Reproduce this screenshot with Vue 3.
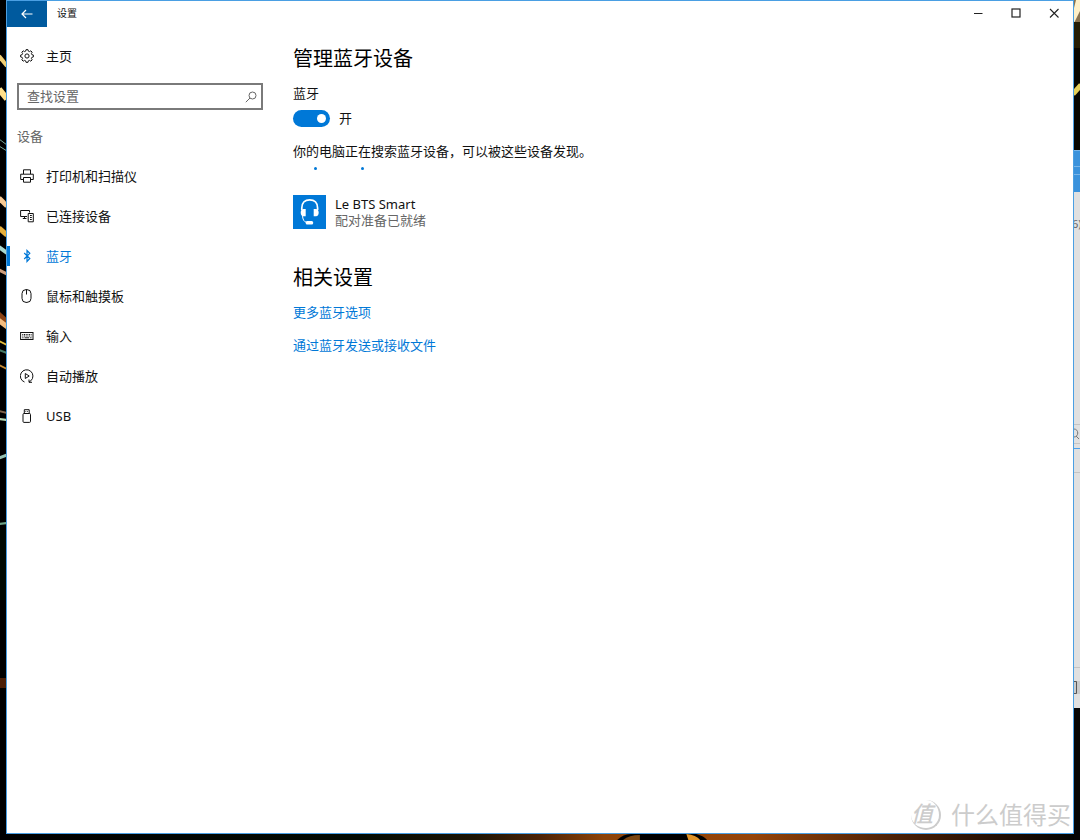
<script setup>
import { ref } from 'vue'

const query = ref('')
const bluetoothOn = ref(true)
const current = ref('bluetooth')

const items = [
  { id: 'printer', label: '打印机和扫描仪' },
  { id: 'connected', label: '已连接设备' },
  { id: 'bluetooth', label: '蓝牙' },
  { id: 'mouse', label: '鼠标和触摸板' },
  { id: 'typing', label: '输入' },
  { id: 'autoplay', label: '自动播放' },
  { id: 'usb', label: 'USB' },
]
</script>

<template>
  <div class="desktop">
    <svg class="edge-left" viewBox="0 0 6 840" preserveAspectRatio="none" aria-hidden="true">
      <rect width="6" height="840" fill="#000" />
      <rect y="530" width="6" height="70" fill="#010a02" />
      <g stroke-width="4" fill="none">
        <path d="M-1 56L7 66" stroke="#f2cf74" />
        <path d="M-1 89L7 99" stroke="#ffe08a" stroke-width="6" />
        <path d="M-1 139L7 145M-1 146L7 151" stroke="#79a99c" stroke-width="1" />
        <path d="M-1 198L7 206" stroke="#f7c993" stroke-width="5" />
        <path d="M-1 228L7 235" stroke="#e8b03c" stroke-width="5" />
        <path d="M-1 247L7 253" stroke="#a8d8cf" />
        <path d="M-1 270L7 274" stroke="#cf9f7c" stroke-width="3" />
        <path d="M-3 314L9 325" stroke="#8a4214" stroke-width="7" />
        <path d="M-3 319L9 328" stroke="#f3bd80" stroke-width="5" />
        <path d="M-1 341L7 345" stroke="#e3bc3d" stroke-width="2" />
        <path d="M-1 350L7 353" stroke="#477a68" stroke-width="2" />
        <path d="M-1 365L7 369" stroke="#c48b36" stroke-width="2" />
        <path d="M-1 411L7 413" stroke="#81644c" stroke-width="2" />
        <path d="M-1 419L7 420" stroke="#b9d9b6" stroke-width="2" />
        <path d="M-1 458L7 455" stroke="#95c2b3" stroke-width="3" />
        <path d="M-1 524L7 523" stroke="#6da288" stroke-width="2" />
      </g>
      <rect y="678" width="6" height="10" fill="#4b1e06" />
    </svg>

    <div class="window">
      <header class="titlebar">
        <button class="back" type="button" aria-label="返回">
          <svg width="12" height="10" viewBox="0 0 12 10"><path d="M11.500 5H1M5 1L1 5L5 9" fill="none" stroke="#fff" stroke-width="1.2" /></svg>
        </button>
        <span class="title">设置</span>
        <div class="captions">
          <button type="button" aria-label="最小化">
            <svg width="10" height="10" viewBox="0 0 10 10"><path d="M1 5.500H9.500" stroke="#222" /></svg>
          </button>
          <button type="button" aria-label="最大化">
            <svg width="10" height="10" viewBox="0 0 10 10"><rect x="1" y="1" width="8" height="8" fill="none" stroke="#222" stroke-width="1.200" /></svg>
          </button>
          <button type="button" aria-label="关闭">
            <svg width="10" height="10" viewBox="0 0 10 10"><path d="M1 1L9.500 9.500M9.500 1L1 9.500" stroke="#222" stroke-width="1.100" /></svg>
          </button>
        </div>
      </header>

      <div class="body">
        <aside class="sidebar">
          <button class="nav-item" type="button">
            <svg class="ico" viewBox="0 0 14 14">
              <path d="M5.7 2.100L6.100.6H7.900L8.300 2.100L9.500 2.600L10.800 1.800L12.200 3.200L11.400 4.500L11.900 5.700L13.400 6.100V7.900L11.900 8.300L11.400 9.500L12.200 10.800L10.800 12.200L9.500 11.400L8.300 11.900L7.900 13.400H6.100L5.700 11.900L4.500 11.400L3.200 12.200L1.800 10.800L2.600 9.500L2.100 8.300L.6 7.900V6.100L2.100 5.700L2.600 4.500L1.800 3.200L3.200 1.800L4.500 2.600Z" />
              <circle cx="7" cy="7" r="2.100" />
            </svg>
            <span>主页</span>
          </button>

          <div class="search">
            <input v-model="query" type="text" placeholder="查找设置" aria-label="查找设置" />
            <svg width="12" height="12" viewBox="0 0 12 12"><g fill="none" stroke="#666"><circle cx="7.500" cy="4.500" r="3.500" /><path d="M5 7L.8 11.200" /></g></svg>
          </div>

          <h2 class="group">设备</h2>

          <nav>
            <button
              v-for="item in items"
              :key="item.id"
              class="nav-item"
              :class="{ active: current === item.id }"
              type="button"
              @click="current = item.id"
            >
              <svg class="ico" viewBox="0 0 14 14">
                <g v-if="item.id === 'printer'">
                  <path d="M3.500 5V.8H10.500V5M3.500 10.500H.7V5.200H13.300V10.500H10.500" />
                  <path d="M3.500 8.500H10.500V13.200H3.500Z" />
                </g>
                <g v-else-if="item.id === 'connected'">
                  <path d="M7 7.500H.6V1.500H9.500V3.500M4.500 7.500V9.500M2.800 9.500H6.500" />
                  <path d="M8.200 4.500H13.300V12.800H8.200ZM10 6.500H11.800M10 8.500H11.800M10 10.500H11.800" />
                </g>
                <path v-else-if="item.id === 'bluetooth'" d="M4.200 4L9.800 9.500L7 12.500V1.500L9.800 4.300L4.200 10" stroke-width="1.200" />
                <g v-else-if="item.id === 'mouse'">
                  <rect x="2" y=".6" width="9" height="12.800" rx="4" />
                  <path d="M6.500 1V5.500" />
                </g>
                <g v-else-if="item.id === 'typing'">
                  <rect x=".6" y="3.500" width="12.400" height="7" />
                  <path d="M2.300 5.500H11.500M2.300 7H11.500" stroke-dasharray="1 .7" />
                  <path d="M2.300 8.800H3.500M4.500 8.800H9.200M10.200 8.800H11.500" />
                </g>
                <g v-else-if="item.id === 'autoplay'">
                  <path d="M4.500 13A6.300 6.300 0 1 1 10.800 11.800L9 13.200M9 10.500V13.300H12" />
                  <path d="M5.300 4.500L9.200 7L5.300 9.500Z" />
                </g>
                <g v-else>
                  <path d="M4.300 4.500V.7H9.200V4.500M5.500 2.500H6.200M7.300 2.500H8" />
                  <rect x="3" y="4.500" width="7.500" height="8.900" rx="1" />
                </g>
              </svg>
              <span>{{ item.label }}</span>
            </button>
          </nav>
        </aside>

        <main class="content">
          <h1>管理蓝牙设备</h1>
          <label class="caption" for="bt-toggle">蓝牙</label>
          <div class="toggle-row">
            <input id="bt-toggle" v-model="bluetoothOn" class="toggle" type="checkbox" role="switch" />
            <span>{{ bluetoothOn ? '开' : '关' }}</span>
          </div>
          <p>你的电脑正在搜索蓝牙设备，可以被这些设备发现。</p>
          <div class="progress" role="progressbar" aria-label="正在搜索"><i></i><i></i></div>

          <button class="device" type="button">
            <svg width="33" height="34" viewBox="0 0 33 34">
              <rect width="33" height="34" fill="#0078d7" />
              <g fill="none" stroke="#fff">
                <path d="M8.800 15V13C8.800 7.800 12 4.800 16.700 4.800S24.600 7.800 24.600 13V15" stroke-width="1.700" />
                <path d="M9.500 20C9.500 24.500 11 27 14 27.500" stroke-width="1" />
              </g>
              <path d="M12.700 14V21.300H10.500C8.700 21.300 7.700 19.700 7.700 17.600S8.700 14 10.500 14ZM20.700 14V21.300H23C24.700 21.300 25.700 19.700 25.700 17.600S24.700 14 23 14Z" fill="#fff" />
              <rect x="12.700" y="26" width="7.500" height="3.600" rx="1.500" fill="#fff" />
            </svg>
            <span class="device-text">
              <span>Le BTS Smart</span>
              <span class="status">配对准备已就绪</span>
            </span>
          </button>

          <h1 class="related">相关设置</h1>
          <a href="#options">更多蓝牙选项</a>
          <a href="#transfer">通过蓝牙发送或接收文件</a>
        </main>
      </div>
    </div>

    <svg class="edge-right" viewBox="0 0 6 840" preserveAspectRatio="none" aria-hidden="true">
      <rect width="6" height="840" fill="#080600" />
      <rect width="6" height="22" fill="#8a7350" />
      <path d="M0 23L6 11V0H2L0 8Z" fill="#fff0c8" />
      <rect y="22" width="6" height="26" fill="#241d05" />
      <path d="M-1 94L7 85" stroke="#e6cf58" stroke-width="5" />
      <rect y="150" width="6" height="42" fill="#3a92dc" />
      <path d="M0 150.500H6M0 166.500H6M0 174.500H6" stroke="#79b5e8" />
      <rect y="192" width="6" height="516" fill="#e0e0e0" />
      <path d="M0 424.500H6M0 443.500H6M0 472.500H6M0 667.500H6" stroke="#c4c4c4" />
      <rect y="448" width="6" height="1" fill="#4aa0ea" />
      <text x="-2" y="228" font-size="11" fill="#666">6)</text>
      <path d="M0 429C5 429 5 437 0 437M2 436L5 439" fill="none" stroke="#777" />
      <rect y="681" width="6" height="13" fill="#cacaca" />
      <path d="M0 681.500H2.500V693.500H0" fill="none" stroke="#555" />
      <rect y="708" width="6" height="132" fill="#050505" />
    </svg>

    <svg class="edge-bottom" viewBox="0 0 1080 6" preserveAspectRatio="none" aria-hidden="true">
      <defs>
        <linearGradient id="glow">
          <stop offset="0" stop-color="#000" />
          <stop offset=".33" stop-color="#020a02" />
          <stop offset=".44" stop-color="#1d1505" />
          <stop offset=".5" stop-color="#4c2307" />
          <stop offset=".56" stop-color="#8d4308" />
          <stop offset=".7" stop-color="#954409" />
          <stop offset=".83" stop-color="#4c2107" />
          <stop offset=".94" stop-color="#1d0d04" />
          <stop offset="1" stop-color="#020402" />
        </linearGradient>
      </defs>
      <rect width="1080" height="6" fill="url(#glow)" />
      <path d="M618 6Q624 0 632 0H698Q706 2 709 6Z" fill="#000" />
      <path d="M624 6Q630 1 641 1V6Z" fill="#7a4510" />
      <path d="M688 0Q698 1 702 6H690Z" fill="#df9226" />
    </svg>

    <div class="watermark"><span class="seal">值</span><span>什么值得买</span></div>
  </div>
</template>

<style>
body {
  margin: 0;
}
</style>

<style scoped>
.desktop {
  position: relative;
  display: grid;
  grid-template-columns: 6px 1fr 6px;
  grid-template-rows: 1fr 6px;
  min-height: 100vh;
  background: #000;
  color: #111;
  font: 13px/20px "Noto Sans", "Noto Sans CJK SC", sans-serif;
}

.edge-left,
.edge-right {
  grid-row: 1 / 3;
  width: 6px;
  height: 100%;
}

.edge-left {
  grid-column: 1;
}

.edge-right {
  grid-column: 3;
}

.edge-bottom {
  grid-column: 2;
  grid-row: 2;
  width: 100%;
  height: 6px;
}

.window {
  grid-column: 2;
  grid-row: 1;
  display: flex;
  flex-direction: column;
  border: 1px solid #4a9fe3;
  background: #fff;
}

button {
  padding: 0;
  border: 0;
  background: none;
  color: inherit;
  font: inherit;
  text-align: left;
}

.titlebar {
  display: flex;
  align-items: flex-start;
  height: 26px;
}

.back {
  display: grid;
  place-items: center;
  width: 40px;
  height: 26px;
  background: #005a9e;
}

.title {
  flex: 1;
  padding-left: 10px;
  font-size: 10px;
  line-height: 24px;
}

.captions {
  display: flex;
}

.captions button {
  display: grid;
  place-items: center;
  width: 38px;
  height: 24px;
}

.body {
  display: flex;
  flex: 1;
}

.sidebar {
  width: 286px;
  padding-top: 9px;
}

.nav-item {
  position: relative;
  display: flex;
  align-items: center;
  gap: 12px;
  width: 100%;
  height: 40px;
  padding-left: 13px;
}

.ico {
  width: 14px;
  height: 14px;
  fill: none;
  stroke: currentColor;
  stroke-width: 1;
}

.active {
  color: #0078d7;
}

.active::before {
  content: "";
  position: absolute;
  left: 0;
  width: 3px;
  height: 20px;
  background: #0078d7;
}

.search {
  display: flex;
  align-items: center;
  box-sizing: border-box;
  height: 27px;
  margin: 7px 30px 6px 10px;
  padding: 0 4px 0 8px;
  border: 2px solid #7a7a7a;
}

.search input {
  flex: 1;
  min-width: 0;
  padding: 0 0 2px;
  border: 0;
  outline: 0;
  background: none;
  color: #111;
  font: inherit;
}

.search input::placeholder {
  color: #666;
  opacity: 1;
}

.group {
  margin: 0 0 0 10px;
  color: #666;
  font-size: 13px;
  font-weight: 400;
  line-height: 40px;
}

.content {
  display: flex;
  flex: 1;
  flex-direction: column;
  align-items: flex-start;
  padding-top: 17px;
}

h1 {
  margin: 0;
  color: #000;
  font-size: 20px;
  font-weight: 400;
  line-height: 30px;
}

.caption {
  margin-top: 9px;
}

.toggle-row {
  display: flex;
  align-items: center;
  gap: 9px;
  margin-top: 5px;
}

.toggle {
  display: flex;
  align-items: center;
  justify-content: flex-start;
  box-sizing: border-box;
  width: 37px;
  height: 17px;
  margin: 0;
  padding: 0 4px;
  border-radius: 9px;
  background: #999;
  appearance: none;
}

.toggle:checked {
  justify-content: flex-end;
  background: #0078d7;
}

.toggle::before {
  content: "";
  width: 9px;
  height: 9px;
  border-radius: 50%;
  background: #fff;
}

p {
  margin: 13px 0 0;
}

.progress {
  display: flex;
  gap: 44px;
  margin: 6px 0 0 21px;
}

.progress i {
  width: 3px;
  height: 3px;
  border-radius: 50%;
  background: #0078d7;
}

.device {
  display: flex;
  align-items: center;
  gap: 9px;
  margin: 25px 0 34px;
}

.device-text {
  display: flex;
  flex-direction: column;
  line-height: 16px;
}

.status {
  color: #666;
}

a {
  margin-top: 13px;
  color: #0078d7;
  text-decoration: none;
}

.related + a {
  margin-top: 9px;
}

.watermark {
  position: absolute;
  right: 9px;
  bottom: 9px;
  display: flex;
  align-items: center;
  gap: 10px;
  color: #ccc;
  font-size: 24px;
  line-height: 32px;
}

.seal {
  width: 28px;
  height: 28px;
  border: solid #ccc;
  border-width: 0 2px 2px 0;
  border-color: transparent #ccc #ccc transparent;
  border-radius: 50%;
  font-size: 22px;
  font-style: italic;
  font-weight: 500;
  line-height: 26px;
}
</style>
